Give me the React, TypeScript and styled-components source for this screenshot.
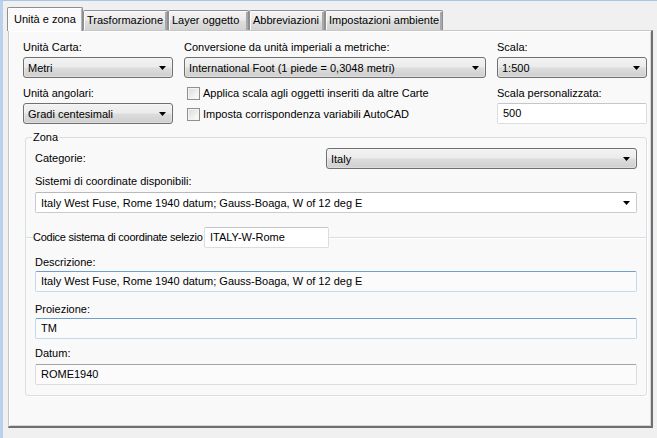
import styled, { createGlobalStyle } from "styled-components";

const GlobalStyle = createGlobalStyle`
  html, body {
    margin: 0;
    padding: 0;
    background: #f0f0f0;
  }
  body {
    font-family: "Liberation Sans", Arial, sans-serif;
    font-size: 11px;
    color: #000;
  }
  * {
    box-sizing: border-box;
  }
`;

const Window = styled.div`
  width: 657px;
  height: 438px;
  border-top: 1px solid #a9c5e6;
  border-left: 3px solid #b9d1ec;
  padding: 6px 0 0 5px;
  display: flex;
  flex-direction: column;
`;

const TabBar = styled.div`
  display: flex;
  align-items: flex-end;
  height: 23px;
  margin-left: -1px;
  position: relative;
  z-index: 1;
`;

const Tab = styled.div<{ $active?: boolean; $w: number }>`
  width: ${(p) => p.$w}px;
  height: ${(p) => (p.$active ? 24 : 20)}px;
  margin-bottom: ${(p) => (p.$active ? -1 : 0)}px;
  padding-left: ${(p) => (p.$active ? 6 : 3)}px;
  padding-top: ${(p) => (p.$active ? 4 : 2)}px;
  line-height: 14px;
  white-space: nowrap;
  border: 1px solid #8e8f92;
  border-bottom: none;
  border-radius: 2px 2px 0 0;
  background: ${(p) =>
    p.$active
      ? "#fafafa"
      : "linear-gradient(#f4f4f4 0%, #ececec 45%, #dedede 55%, #d2d2d2 100%)"};
  box-shadow: ${(p) =>
    p.$active
      ? "inset 1px 1px 0 #ffffff, inset -1px 0 0 #b5b5b5"
      : "inset 1px 1px 0 #fbfbfb, inset -2px 0 0 #a8a8a8"};
`;

const Panel = styled.div`
  width: 645px;
  height: 398px;
  background: #f9f9f9;
  border-top: 1px solid #c7c7c7;
  border-left: 1px solid #c7c7c7;
  border-right: 2px solid #6f6f6f;
  border-bottom: 2px solid #6f6f6f;
  box-shadow: inset 1px 1px 0 #ffffff, inset -1px -1px 0 #d6d6d6;
  padding: 10px 0 0 14px;
`;

const TopGrid = styled.div`
  display: grid;
  grid-template-columns: 150px 302px 150px;
  column-gap: 11px;
  row-gap: 9px;
`;

const Field = styled.div<{ $gap?: number; $top?: number }>`
  display: flex;
  flex-direction: column;
  gap: ${(p) => p.$gap ?? 3}px;
  margin-top: ${(p) => p.$top ?? 0}px;
`;

const Label = styled.div`
  line-height: 13px;
  height: 13px;
  white-space: nowrap;
`;

const ComboBox = styled.div<{ $w?: number }>`
  width: ${(p) => (p.$w ? `${p.$w}px` : "100%")};
  height: 21px;
  display: flex;
  align-items: center;
  justify-content: space-between;
  padding: 0 6px 0 4px;
  border: 1px solid #707070;
  border-radius: 3px;
  background: linear-gradient(#f3f3f3 0%, #ebebeb 48%, #dddddd 52%, #cfcfcf 100%);
  box-shadow: inset 0 0 0 1px #fcfcfc55;
  white-space: nowrap;
`;

const EditCombo = styled.div`
  height: 21px;
  display: flex;
  align-items: center;
  justify-content: space-between;
  padding: 0 6px 0 5px;
  background: #ffffff;
  border: 1px solid #c9cbd0;
  border-top-color: #b7b9be;
  border-radius: 2px;
  white-space: nowrap;
`;

const TextBox = styled.div<{ $tone?: "blue" | "gray" | "plain"; $w?: number }>`
  width: ${(p) => (p.$w ? `${p.$w}px` : "100%")};
  height: 21px;
  line-height: 19px;
  padding: 0 5px;
  white-space: nowrap;
  border-radius: 2px;
  background: ${(p) => (p.$tone === "plain" ? "#ffffff" : "#fbfbfb")};
  border: 1px solid
    ${(p) =>
      p.$tone === "blue" ? "#c5d9ec" : p.$tone === "gray" ? "#dcdcdc" : "#dadde2"};
  border-top-color: ${(p) =>
    p.$tone === "blue" ? "#709fcc" : p.$tone === "gray" ? "#a2a2a2" : "#c3c6cb"};
`;

const Arrow = () => (
  <svg width="7" height="4" viewBox="0 0 7 4">
    <polygon points="0,0 7,0 3.5,4" fill="#000" />
  </svg>
);

const CheckList = styled.div`
  display: flex;
  flex-direction: column;
  gap: 8px;
  padding-left: 3px;
`;

const CheckRow = styled.label`
  display: flex;
  align-items: center;
  gap: 3px;
  height: 13px;
  line-height: 13px;
  white-space: nowrap;
`;

const CheckBox = styled.span`
  width: 13px;
  height: 13px;
  flex: none;
  border: 1px solid #8f8f8f;
  background: linear-gradient(135deg, #dadada 0%, #f0f0f0 60%, #ffffff 100%);
  box-shadow: inset 0 0 0 1px #f4f4f4;
`;

const Group = styled.fieldset`
  margin: 7px 0 0 2px;
  width: 622px;
  padding: 4px 9px 10px 9px;
  border: 1px solid #d5dfe5;
  border-radius: 3px;
  box-shadow: 1px 1px 0 #ffffff;
`;

const Legend = styled.legend`
  padding: 0 1px;
  margin-left: -3px;
  line-height: 13px;
`;

const Row = styled.div`
  display: flex;
  align-items: center;
  justify-content: space-between;
`;

const Stack = styled.div`
  display: flex;
  flex-direction: column;
`;

const Divider = styled.div`
  display: flex;
  align-items: center;
  margin: 14px -9px 8px -9px;
`;

const Line = styled.div<{ $w?: number }>`
  height: 2px;
  ${(p) => (p.$w ? `width: ${p.$w}px;` : "flex: 1;")}
  border-top: 1px solid #d5dfe5;
  border-bottom: 1px solid #ffffff;
`;

const DividerLabel = styled.div`
  width: 171px;
  white-space: nowrap;
  line-height: 13px;
  letter-spacing: -0.25px;
`;

const tabs = [
  { title: "Unità e zona", w: 76 },
  { title: "Trasformazione", w: 85 },
  { title: "Layer oggetto", w: 81 },
  { title: "Abbreviazioni", w: 76 },
  { title: "Impostazioni ambiente", w: 118 },
];

const coordSystem = "Italy West Fuse, Rome 1940 datum; Gauss-Boaga, W of 12 deg E";

export default function App() {
  return (
    <>
      <GlobalStyle />
      <Window>
        <TabBar>
          {tabs.map((t, i) => (
            <Tab key={t.title} $active={i === 0} $w={t.w}>
              {t.title}
            </Tab>
          ))}
        </TabBar>
        <Panel>
          <TopGrid>
            <Field>
              <Label>Unità Carta:</Label>
              <ComboBox>
                Metri
                <Arrow />
              </ComboBox>
            </Field>
            <Field>
              <Label>Conversione da unità imperiali a metriche:</Label>
              <ComboBox>
                International Foot (1 piede = 0,3048 metri)
                <Arrow />
              </ComboBox>
            </Field>
            <Field>
              <Label>Scala:</Label>
              <ComboBox>
                1:500
                <Arrow />
              </ComboBox>
            </Field>
            <Field>
              <Label>Unità angolari:</Label>
              <ComboBox>
                Gradi centesimali
                <Arrow />
              </ComboBox>
            </Field>
            <CheckList>
              <CheckRow>
                <CheckBox />
                Applica scala agli oggetti inseriti da altre Carte
              </CheckRow>
              <CheckRow>
                <CheckBox />
                Imposta corrispondenza variabili AutoCAD
              </CheckRow>
            </CheckList>
            <Field>
              <Label>Scala personalizzata:</Label>
              <TextBox $tone="plain">500</TextBox>
            </Field>
          </TopGrid>

          <Group>
            <Legend>Zona</Legend>
            <Row>
              <Label>Categorie:</Label>
              <ComboBox $w={311}>
                Italy
                <Arrow />
              </ComboBox>
            </Row>
            <Field $gap={4} $top={6}>
              <Label>Sistemi di coordinate disponibili:</Label>
              <EditCombo>
                {coordSystem}
                <Arrow />
              </EditCombo>
            </Field>
            <Divider>
              <Line $w={7} />
              <DividerLabel>Codice sistema di coordinate selezio</DividerLabel>
              <TextBox $tone="plain" $w={125}>
                ITALY-W-Rome
              </TextBox>
              <Line />
            </Divider>
            <Stack>
              <Field $gap={2}>
                <Label>Descrizione:</Label>
                <TextBox $tone="blue">{coordSystem}</TextBox>
              </Field>
              <Field $gap={2} $top={11}>
                <Label>Proiezione:</Label>
                <TextBox $tone="blue">TM</TextBox>
              </Field>
              <Field $gap={4} $top={8}>
                <Label>Datum:</Label>
                <TextBox $tone="gray">ROME1940</TextBox>
              </Field>
            </Stack>
          </Group>
        </Panel>
      </Window>
    </>
  );
}
